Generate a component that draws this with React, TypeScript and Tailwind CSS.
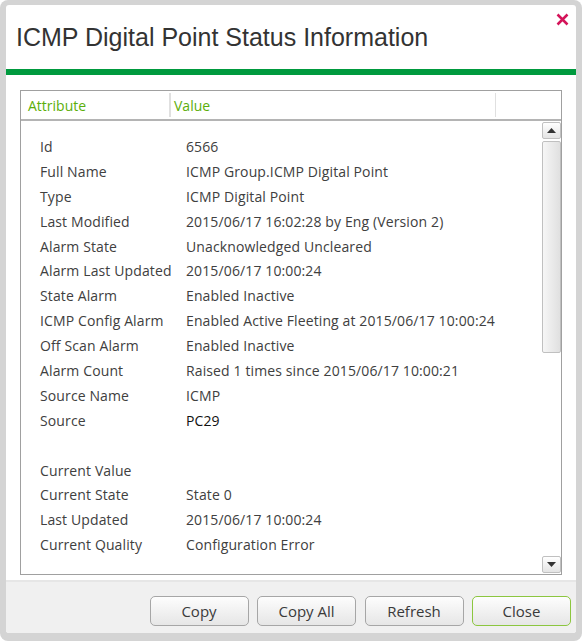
import React from "react";

const rows: [string, string, boolean?][] = [
  ["Id", "6566"],
  ["Full Name", "ICMP Group.ICMP Digital Point"],
  ["Type", "ICMP Digital Point"],
  ["Last Modified", "2015/06/17 16:02:28 by Eng (Version 2)"],
  ["Alarm State", "Unacknowledged Uncleared"],
  ["Alarm Last Updated", "2015/06/17 10:00:24"],
  ["State Alarm", "Enabled Inactive"],
  ["ICMP Config Alarm", "Enabled Active Fleeting at 2015/06/17 10:00:24"],
  ["Off Scan Alarm", "Enabled Inactive"],
  ["Alarm Count", "Raised 1 times since 2015/06/17 10:00:21"],
  ["Source Name", "ICMP"],
  ["Source", "PC29", true],
  ["", ""],
  ["Current Value", ""],
  ["Current State", "State 0"],
  ["Last Updated", "2015/06/17 10:00:24"],
  ["Current Quality", "Configuration Error"],
];

function Btn({ label, primary }: { label: string; primary?: boolean }) {
  return (
    <button
      className={
        "w-[99px] h-[30px] rounded-[5px] border bg-gradient-to-b from-[#fdfdfd] to-[#e6e6e6] text-[15px] text-[#3a3a3a] " +
        (primary ? "border-[#8cc63f]" : "border-[#a6a6a6]")
      }
    >
      {label}
    </button>
  );
}

export default function App() {
  return (
    <div
      className="w-[582px] h-[641px] bg-[#d4d4d4] rounded-[8px] pt-[5px] px-[6px] pb-[8px]"
      style={{ fontFamily: '"Open Sans", "Noto Sans", sans-serif' }}
    >
      <div className="w-full h-full bg-white rounded-[3px] flex flex-col relative overflow-hidden">
        <svg className="absolute left-[550px] top-[8px]" width="13" height="13" viewBox="0 0 13 13">
          <path d="M1.5 1.5 L11.5 11.5 M11.5 1.5 L1.5 11.5" stroke="#d4145a" strokeWidth="2.5" />
        </svg>
        <div
          className="h-[64px] flex items-center pl-[10px] pt-[2px] text-[25px] text-[#333]"
          style={{ fontFamily: '"Liberation Sans", Arial, sans-serif' }}
        >
          ICMP Digital Point Status Information
        </div>
        <div className="h-[6px] bg-[#009a3e]" />
        <div className="flex-1 pt-[15px] px-[14px] pb-[5px] flex flex-col">
          <div className="flex-1 border border-[#a0a0a0] flex flex-col">
            <div className="h-[30px] flex items-center border-b-2 border-[#b4b4b4] text-[14px] text-[#5cae0a]">
              <div className="w-[150px] pl-[7px] h-[24px] flex items-center border-r-2 border-[#e0e0e0]">
                Attribute
              </div>
              <div className="w-[325px] pl-[3px] h-[24px] flex items-center border-r border-[#e0e0e0]">
                Value
              </div>
            </div>
            <div className="flex-1 flex">
              <div className="flex-1 pt-[13px] text-[14px] text-[#404040] tracking-[0.12px]">
                {rows.map(([a, v, dark], i) => (
                  <div key={i} className="h-[24.9px] flex items-center">
                    <div className="w-[165px] pl-[19px] whitespace-nowrap">{a}</div>
                    <div className={"whitespace-nowrap " + (dark ? "text-[#111]" : "")}>{v}</div>
                  </div>
                ))}
              </div>
              <div className="w-[20px] flex flex-col pt-[1px] pb-[1px] pl-[1px]">
                <div className="h-[17px] rounded-[2px] border border-[#c0c0c0] bg-gradient-to-b from-white to-[#e4e4e4] flex items-center justify-center">
                  <svg width="9" height="5" viewBox="0 0 9 5">
                    <path d="M4.5 0 L9 5 L0 5 Z" fill="#333" />
                  </svg>
                </div>
                <div className="h-[212px] mt-[2px] rounded-[2px] border border-[#c0c0c0] bg-gradient-to-r from-[#f6f6f6] to-[#e0e0e0]" />
                <div className="flex-1" />
                <div className="h-[17px] rounded-[2px] border border-[#c0c0c0] bg-gradient-to-b from-white to-[#e4e4e4] flex items-center justify-center">
                  <svg width="9" height="5" viewBox="0 0 9 5">
                    <path d="M0 0 L9 0 L4.5 5 Z" fill="#333" />
                  </svg>
                </div>
              </div>
            </div>
          </div>
        </div>
        <div className="h-[53px] border-t-2 border-[#e6e6e6] bg-[#f0f0f0] flex items-start justify-end gap-[8.5px] pr-[5px] pt-[14px]">
          <Btn label="Copy" />
          <Btn label="Copy All" />
          <Btn label="Refresh" />
          <Btn label="Close" primary />
        </div>
      </div>
    </div>
  );
}
